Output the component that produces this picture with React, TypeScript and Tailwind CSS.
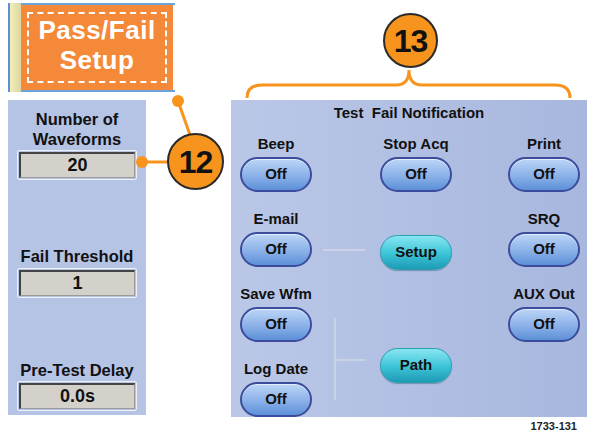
import React from "react";

const OffButton = ({ label = "Off" }: { label?: string }) => (
  <div className="h-[35px] w-[72px] rounded-full border-2 border-[#3b4c9c] bg-linear-to-b from-[#bcd5f6] via-[#8fb4ea] to-[#5d90d8] flex items-center justify-center text-[15px] font-bold text-[#111] shadow-[inset_0_1px_0_rgba(255,255,255,0.6)]">
    {label}
  </div>
);

const CyanButton = ({ label }: { label: string }) => (
  <div className="h-[35px] w-[72px] rounded-full border border-[#2b9fb2] bg-linear-to-b from-[#86e6f0] via-[#3ec7da] to-[#1d9bb5] flex items-center justify-center text-[15px] font-bold text-[#111] shadow-[0_1px_1px_rgba(0,60,90,0.35)]">
    {label}
  </div>
);

const Labeled = ({ label }: { label: string }) => (
  <div className="flex flex-col items-center">
    <div className="h-[18px] leading-[18px] text-[15px] font-bold text-[#111] whitespace-nowrap">
      {label}
    </div>
    <div className="mt-[4px]">
      <OffButton />
    </div>
  </div>
);

const Field = ({ value, className = "" }: { value: string; className?: string }) => (
  <div className={`w-[120px] h-[30px] border border-[#eef1f8] rounded-[2px] p-[1px] ${className}`}>
    <div className="h-full bg-[#d4d1cb] border-t-2 border-l-2 border-[#444] border-b border-r border-b-[#9a9a9a] border-r-[#9a9a9a] flex items-center justify-center text-[18px] font-bold text-[#111]">
      {value}
    </div>
  </div>
);

const SideLabel = ({ children, className = "" }: { children: React.ReactNode; className?: string }) => (
  <div className={`text-[16.5px] font-bold leading-[20px] text-center text-[#111] whitespace-nowrap ${className}`}>
    {children}
  </div>
);

export default function App() {
  return (
    <div className="relative w-[589px] h-[438px] bg-white overflow-hidden font-['Liberation_Sans',Arial,sans-serif]">
      <div className="flex">
        {/* left column */}
        <div className="ml-[8px] w-[167px] flex flex-col">
          <div className="mt-[3px] h-[89px] flex border-l-2 border-[#5b8fd6]">
            <div className="w-[11px] bg-linear-to-r from-[#f3eeb8] to-[#dcd7a2]" />
            <div className="flex-1 border-y-2 border-[#6aa3dc]">
              <div className="h-full mr-[2px] bg-[#f5893a] px-[6px] py-[7px]">
                <div className="h-full border-2 border-dashed border-white flex flex-col items-center justify-center pb-[6px] text-white text-[26px] font-bold leading-[30px] tracking-[0.5px]">
                  <span>Pass/Fail</span>
                  <span>Setup</span>
                </div>
              </div>
            </div>
          </div>

          <div className="mt-[8px] w-[138px] h-[315px] bg-[#b5c3e4] pt-[9px] flex flex-col items-center">
            <SideLabel>
              Number of
              <br />
              Waveforms
            </SideLabel>
            <Field value="20" className="mt-[1px]" />
            <SideLabel className="mt-[66px]">Fail Threshold</SideLabel>
            <Field value="1" className="mt-[2px]" />
            <SideLabel className="mt-[62px]">Pre-Test Delay</SideLabel>
            <Field value="0.0s" className="mt-[1px]" />
          </div>
        </div>

        {/* right column */}
        <div className="ml-[56px] flex flex-col">
          <div className="mt-[100px] w-[356px] h-[317px] bg-linear-to-r from-[#bac7e7] to-[#a8b7de] pt-[4px]">
            <div className="text-center text-[15px] font-bold leading-[18px] text-[#111] whitespace-pre">
              Test  Fail Notification
            </div>
            <div className="mt-[13px] flex pl-[9px]">
              <div className="w-[72px] flex flex-col gap-[18px]">
                <Labeled label="Beep" />
                <Labeled label="E-mail" />
                <Labeled label="Save Wfm" />
                <Labeled label="Log Date" />
              </div>
              <div className="ml-[68px] w-[72px] flex flex-col">
                <Labeled label="Stop Acq" />
                <div className="mt-[43px]">
                  <CyanButton label="Setup" />
                </div>
                <div className="mt-[78px]">
                  <CyanButton label="Path" />
                </div>
              </div>
              <div className="ml-[56px] w-[72px] flex flex-col gap-[18px]">
                <Labeled label="Print" />
                <Labeled label="SRQ" />
                <Labeled label="AUX Out" />
              </div>
            </div>
          </div>
          <div className="mt-[3px] pr-[10px] text-right text-[11px] font-bold leading-[13px] text-[#222]">
            1733-131
          </div>
        </div>
      </div>

      {/* callouts */}
      <svg className="absolute inset-0 pointer-events-none" width="589" height="438" viewBox="0 0 589 438">
        <path
          d="M247 98 Q247 85 262 85 L396 85 Q409 85 409 70 Q409 85 422 85 L555 85 Q570 85 570 98"
          fill="none"
          stroke="#f7941d"
          strokeWidth="3"
        />
        <line x1="178" y1="101" x2="190" y2="135" stroke="#f7941d" strokeWidth="3" />
        <circle cx="178" cy="101" r="6" fill="#f7941d" />
        <line x1="142" y1="162" x2="169" y2="162" stroke="#f7941d" strokeWidth="3" />
        <circle cx="142" cy="162" r="6" fill="#f7941d" />
        <g stroke="#d3d7e6" strokeWidth="1.5">
          <line x1="323" y1="250" x2="365" y2="250" />
          <line x1="335" y1="318" x2="335" y2="400" />
          <line x1="335" y1="360" x2="365" y2="360" />
        </g>
      </svg>

      <div className="absolute left-[383px] top-[13px] w-[55px] h-[55px] rounded-full bg-[#f7941d] border-2 border-[#2a2a2a] flex items-center justify-center text-[32px] font-bold tracking-[-1px] text-[#111]">
        13
      </div>
      <div className="absolute left-[167px] top-[133px] w-[57px] h-[57px] rounded-full bg-[#f7941d] border-2 border-[#2a2a2a] flex items-center justify-center text-[32px] font-bold tracking-[-1px] text-[#111]">
        12
      </div>
    </div>
  );
}
